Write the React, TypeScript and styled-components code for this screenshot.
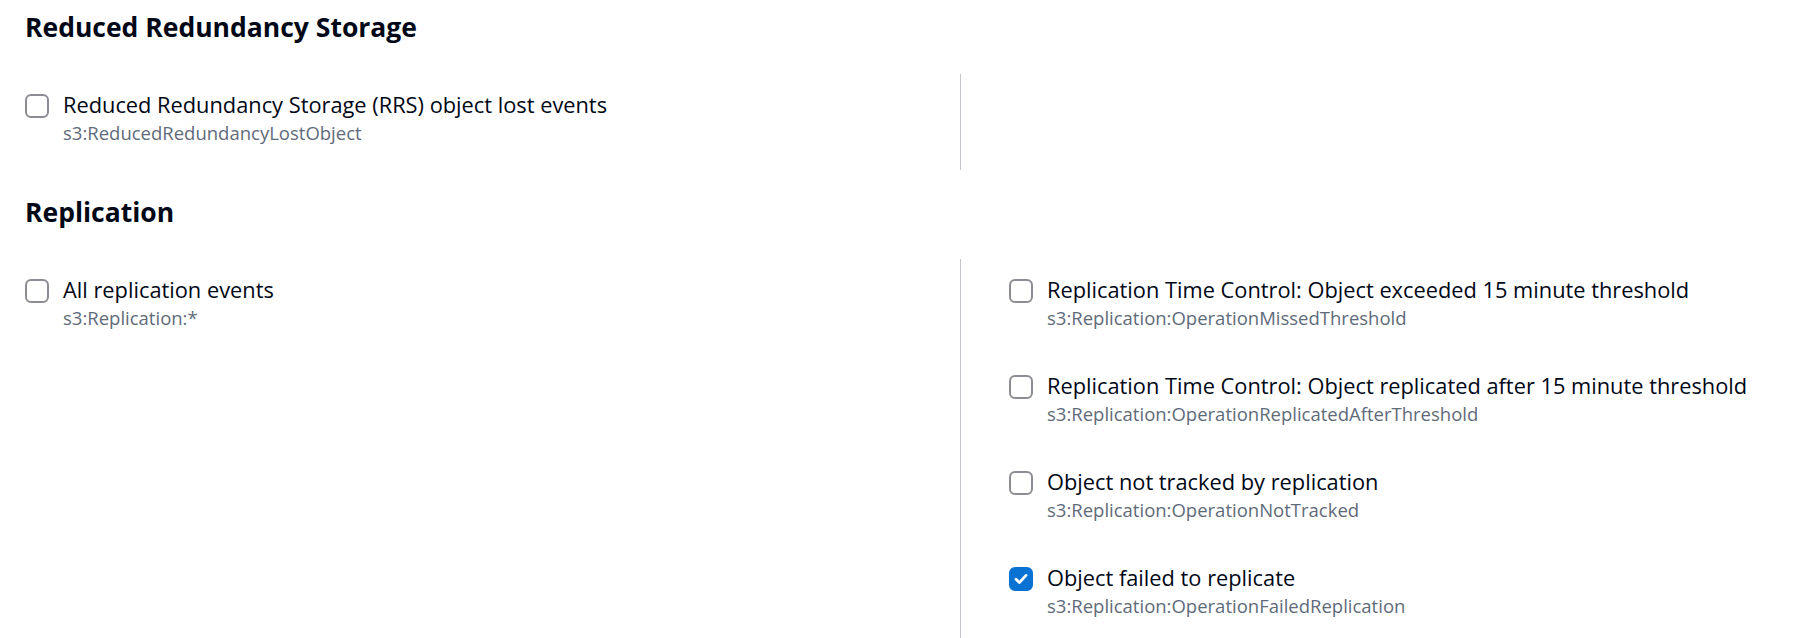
import React from "react";
import styled, { createGlobalStyle } from "styled-components";

const GlobalStyle = createGlobalStyle`
  body {
    margin: 0;
    background: #ffffff;
    font-family: "Open Sans", "Noto Sans", Arial, sans-serif;
    color: #000716;
    overflow: hidden;
  }
`;

const Page = styled.div`
  padding: 9px 0 0 25px;
`;

const Section = styled.section`
  & + & {
    margin-top: 24px;
  }
`;

const SectionTitle = styled.h2`
  margin: 0;
  font-size: 26.5px;
  line-height: 36px;
  font-weight: 700;
  color: #000716;
`;

const Columns = styled.div`
  display: grid;
  grid-template-columns: 935px 1fr;
  margin-top: 29px;
`;

const Column = styled.div<{ $divided?: boolean }>`
  display: flex;
  flex-direction: column;
  padding-left: ${(p) => (p.$divided ? "48px" : "0")};
  border-left: ${(p) => (p.$divided ? "1px solid #c6c6cd" : "none")};
  min-height: 96px;
`;

const Item = styled.label`
  display: flex;
  align-items: flex-start;
  gap: 14px;
  height: 96px;
  box-sizing: border-box;
  padding-top: 19px;
  cursor: pointer;
`;

const Box = styled.span<{ $checked?: boolean }>`
  flex: none;
  width: 24px;
  height: 24px;
  margin-top: 1px;
  box-sizing: border-box;
  border-radius: 6px;
  border: 2px solid ${(p) => (p.$checked ? "#0972d3" : "#8c8c94")};
  background: ${(p) => (p.$checked ? "#0972d3" : "#ffffff")};
  display: flex;
  align-items: center;
  justify-content: center;
`;

const Text = styled.span`
  display: flex;
  flex-direction: column;
`;

const Label = styled.span`
  font-size: 21.8px;
  line-height: 24px;
  color: #000716;
`;

const EventName = styled.span`
  margin-top: 4px;
  font-size: 18.5px;
  line-height: 24px;
  color: #5f6b7a;
`;

type EventOption = { label: string; name: string; checked?: boolean };

const Check = ({ label, name, checked }: EventOption) => (
  <Item>
    <Box $checked={checked}>
      {checked && (
        <svg width="16" height="16" viewBox="0 0 16 16" fill="none">
          <path
            d="M3 8.3 L6.4 11.6 L13 4.4"
            stroke="#ffffff"
            strokeWidth="2.8"
            strokeLinecap="round"
            strokeLinejoin="round"
          />
        </svg>
      )}
    </Box>
    <Text>
      <Label>{label}</Label>
      <EventName>{name}</EventName>
    </Text>
  </Item>
);

const replicationDetail: EventOption[] = [
  {
    label: "Replication Time Control: Object exceeded 15 minute threshold",
    name: "s3:Replication:OperationMissedThreshold",
  },
  {
    label: "Replication Time Control: Object replicated after 15 minute threshold",
    name: "s3:Replication:OperationReplicatedAfterThreshold",
  },
  {
    label: "Object not tracked by replication",
    name: "s3:Replication:OperationNotTracked",
  },
  {
    label: "Object failed to replicate",
    name: "s3:Replication:OperationFailedReplication",
    checked: true,
  },
];

export default function App() {
  return (
    <Page>
      <GlobalStyle />
      <Section>
        <SectionTitle>Reduced Redundancy Storage</SectionTitle>
        <Columns>
          <Column>
            <Check
              label="Reduced Redundancy Storage (RRS) object lost events"
              name="s3:ReducedRedundancyLostObject"
            />
          </Column>
          <Column $divided />
        </Columns>
      </Section>
      <Section>
        <SectionTitle>Replication</SectionTitle>
        <Columns>
          <Column>
            <Check label="All replication events" name="s3:Replication:*" />
          </Column>
          <Column $divided>
            {replicationDetail.map((opt) => (
              <Check key={opt.name} {...opt} />
            ))}
          </Column>
        </Columns>
      </Section>
    </Page>
  );
}
